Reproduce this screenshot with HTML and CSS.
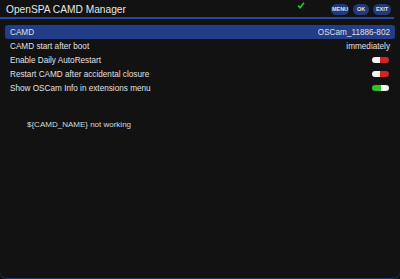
FILE: index.html
```html
<!DOCTYPE html>
<html>
  <head>
    <meta charset="utf-8">
    <link rel="stylesheet" href="styles.css">
  </head>
  <body>
    <div class="screen">
      <div class="header">
        <div class="title">OpenSPA CAMD Manager</div>
        <div class="controls">
          <svg class="check" width="8" height="7" viewBox="0 0 8 7">
            <path d="M1 3.5 L3 5.8 L7 0.8" fill="none" stroke="#1fcf1f" stroke-width="1.6"/>
          </svg>
          <span class="key wide">MENU</span>
          <span class="key">OK</span>
          <span class="key wide">EXIT</span>
        </div>
      </div>
      <div class="rule"></div>

      <div class="config-list">
        <div class="config-row selected">
          <span class="label">CAMD</span>
          <span class="value">OSCam_11886-802</span>
        </div>
        <div class="config-row">
          <span class="label">CAMD start after boot</span>
          <span class="value">immediately</span>
        </div>
        <div class="config-row">
          <span class="label">Enable Daily AutoRestart</span>
          <span class="toggle off"><span class="knob"></span><span class="track"></span></span>
        </div>
        <div class="config-row">
          <span class="label">Restart CAMD after accidental closure</span>
          <span class="toggle off"><span class="knob"></span><span class="track"></span></span>
        </div>
        <div class="config-row">
          <span class="label">Show OSCam Info in extensions menu</span>
          <span class="toggle on"><span class="track"></span><span class="knob"></span></span>
        </div>
      </div>

      <div class="status">${CAMD_NAME} not working</div>
    </div>
  </body>
</html>
```

FILE: styles.css
```css
body {
  margin: 0;
  padding: 0;
  background-color: #111111;
  font-family: 'Liberation Sans', Arial, sans-serif;
}
.screen {
  height: 278px;
  background-color: #121212;
  border-bottom: 1px solid #23366e;
  border-radius: 0 0 7px 7px;
  overflow: hidden;
}
.header {
  height: 17px;
  display: flex;
  justify-content: space-between;
  align-items: center;
  padding: 0 9px 0 6px;
}
.title {
  font-size: 10.2px;
  color: #e6e6e6;
  padding-top: 1px;
}
.controls {
  display: flex;
  align-items: center;
  gap: 4px;
}
.check {
  margin-right: 22px;
  margin-top: -6px;
}
.key {
  background-color: #223a78;
  color: #dfe4f0;
  font-size: 5.5px;
  font-weight: bold;
  width: 16px;
  height: 11px;
  line-height: 11px;
  text-align: center;
  border-radius: 6px;
  margin-top: 1px;
}
.key.wide {
  width: 18px;
}
.rule {
  height: 2px;
  background-color: #2848a8;
  margin: 0 6px 0 0;
}
.config-list {
  padding: 6px 5px 0 5px;
}
.config-row {
  height: 14px;
  display: flex;
  justify-content: space-between;
  align-items: center;
  padding: 0 5px;
  font-size: 8.2px;
  color: #e0e0e0;
}
.config-row.selected {
  background-color: #233d88;
  border-radius: 3px;
}
.toggle {
  display: flex;
  width: 17px;
  height: 6px;
  border-radius: 3px;
  overflow: hidden;
  margin: -1px 1px 0 0;
}
.toggle .knob {
  width: 8px;
  background-color: #f2f2f2;
}
.toggle .track {
  flex: 1;
}
.toggle.off .track {
  background-color: #d42323;
}
.toggle.on .track {
  background-color: #2fbf2f;
}
.status {
  padding: 25px 0 0 27px;
  font-size: 8px;
  color: #d8d8d8;
}
```
